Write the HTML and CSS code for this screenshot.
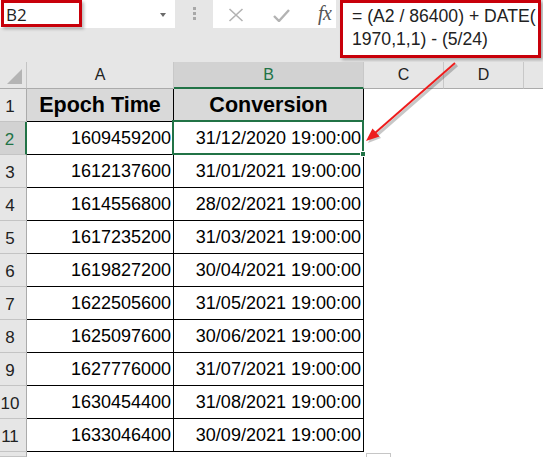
FILE: index.html
```html
<!DOCTYPE html>
<html>
<head>
<meta charset="utf-8">
<link rel="stylesheet" href="styles.css">
</head>
<body>
<div class="page">
  <div class="toolbar">
    <div class="namebox">
      <span class="nb-text">B2</span>
      <span class="dd"></span>
      <div class="mark nb-mark"></div>
    </div>
    <div class="dots"><i></i><i></i><i></i></div>
    <div class="fxbox">
      <svg class="ic-x" width="16" height="14" viewBox="0 0 16 14"><path d="M1.5 1 L14.5 13 M14.5 1 L1.5 13" stroke="#b3b3b3" stroke-width="1.6" fill="none"/></svg>
      <svg class="ic-ok" width="17" height="13" viewBox="0 0 17 13"><path d="M1 7 L6 12 L16 1" stroke="#b3b3b3" stroke-width="2.4" fill="none"/></svg>
      <span class="fx">fx</span>
    </div>
    <div class="formula">= (A2 / 86400) + DATE(<br>1970,1,1) - (5/24)</div>
  </div>

  <div class="sheet">
    <div class="corner"><span class="tri"></span></div>
    <div class="ch">A</div>
    <div class="ch ch-sel">B</div>
    <div class="ch">C</div>
    <div class="ch">D</div>
    <div class="ch ch-end"></div>

    <div class="rh">1</div>
    <div class="c hd">Epoch Time</div>
    <div class="c hd">Conversion</div>
    <div class="e"></div><div class="e"></div><div class="e"></div>

    <div class="rh rh-sel">2</div>
    <div class="c num">1609459200</div>
    <div class="c num sel">31/12/2020 19:00:00<span class="handle"></span></div>
    <div class="e"></div><div class="e"></div><div class="e"></div>

    <div class="rh">3</div>
    <div class="c num">1612137600</div>
    <div class="c num">31/01/2021 19:00:00</div>
    <div class="e"></div><div class="e"></div><div class="e"></div>

    <div class="rh">4</div>
    <div class="c num">1614556800</div>
    <div class="c num">28/02/2021 19:00:00</div>
    <div class="e"></div><div class="e"></div><div class="e"></div>

    <div class="rh">5</div>
    <div class="c num">1617235200</div>
    <div class="c num">31/03/2021 19:00:00</div>
    <div class="e"></div><div class="e"></div><div class="e"></div>

    <div class="rh">6</div>
    <div class="c num">1619827200</div>
    <div class="c num">30/04/2021 19:00:00</div>
    <div class="e"></div><div class="e"></div><div class="e"></div>

    <div class="rh">7</div>
    <div class="c num">1622505600</div>
    <div class="c num">31/05/2021 19:00:00</div>
    <div class="e"></div><div class="e"></div><div class="e"></div>

    <div class="rh">8</div>
    <div class="c num">1625097600</div>
    <div class="c num">30/06/2021 19:00:00</div>
    <div class="e"></div><div class="e"></div><div class="e"></div>

    <div class="rh">9</div>
    <div class="c num">1627776000</div>
    <div class="c num">31/07/2021 19:00:00</div>
    <div class="e"></div><div class="e"></div><div class="e"></div>

    <div class="rh">10</div>
    <div class="c num">1630454400</div>
    <div class="c num">31/08/2021 19:00:00</div>
    <div class="e"></div><div class="e"></div><div class="e"></div>

    <div class="rh">11</div>
    <div class="c num">1633046400</div>
    <div class="c num">30/09/2021 19:00:00</div>
    <div class="e"></div><div class="e"></div><div class="e"></div>

    <div class="rh"></div>
    <div class="e"></div>
    <div class="e"></div>
    <div class="e"><span class="paste"></span></div>
    <div class="e"></div><div class="e"></div>
  </div>

  <svg class="arrow" width="543" height="457" viewBox="0 0 543 457">
    <line x1="457" y1="65" x2="377" y2="135" stroke="rgba(0,0,0,0.22)" stroke-width="3"/>
    <polygon points="368,143 381,138 374,130" fill="rgba(0,0,0,0.22)"/>
    <line x1="455" y1="63" x2="375" y2="133" stroke="#ee1c1c" stroke-width="2"/>
    <polygon points="366,141 379.5,136.5 372.5,128.5" fill="#ee1c1c"/>
  </svg>
</div>
</body>
</html>
```

FILE: styles.css
```css
* { box-sizing: border-box; }
html, body { margin: 0; padding: 0; }
body {
  width: 543px;
  height: 457px;
  overflow: hidden;
  background: #e6e6e6;
  font-family: "Liberation Sans", Arial, sans-serif;
}
.page {
  position: relative;
  width: 543px;
  height: 457px;
  overflow: hidden;
}

/* ---------- formula bar ---------- */
.toolbar {
  display: flex;
  align-items: flex-start;
  height: 62px;
}
.namebox {
  position: relative;
  width: 175px;
  height: 28px;
  background: #fff;
}
.nb-text {
  position: absolute;
  left: 6px;
  top: 4px;
  font-size: 17px;
  color: #222;
  font-family: "Open Sans", "Liberation Sans", sans-serif;
  line-height: 21px;
}
.dd {
  position: absolute;
  left: 160px;
  top: 13px;
  width: 0;
  height: 0;
  border-left: 3.5px solid transparent;
  border-right: 3.5px solid transparent;
  border-top: 4px solid #6a6a6a;
}
.mark {
  position: absolute;
  border: 3px solid #c8000a;
  box-shadow: 2px 2px 3px rgba(0,0,0,0.28);
}
.nb-mark {
  left: 1px;
  top: 0;
  width: 81px;
  height: 27px;
}
.dots {
  width: 38px;
  height: 28px;
  display: flex;
  flex-direction: column;
  align-items: center;
  padding-top: 7px;
  gap: 2px;
}
.dots i {
  display: block;
  width: 3px;
  height: 3px;
  background: #a8a8a8;
}
.fxbox {
  width: 123px;
  height: 28px;
  background: #fff;
  display: flex;
  align-items: center;
  padding-left: 15px;
}
.ic-x { margin-top: 1px; }
.ic-ok { margin-left: 29px; margin-top: 3px; }
.fx {
  margin-left: 28px;
  font-family: "Liberation Serif", "Times New Roman", serif;
  font-style: italic;
  font-size: 20px;
  color: #555;
  letter-spacing: -0.5px;
  margin-top: -2px;
}
.formula {
  margin-left: 4px;
  width: 201px;
  height: 58px;
  background: #fff;
  border: 3px solid #c8000a;
  box-shadow: 2px 2px 3px rgba(0,0,0,0.28);
  padding: 2px 0 0 9px;
  font-size: 17.6px;
  line-height: 23px;
  color: #222;
  white-space: nowrap;
  overflow: hidden;
}

/* ---------- sheet ---------- */
.sheet {
  display: grid;
  grid-template-columns: 27px 147px 190px 80px 80px 19px;
  grid-template-rows: 27px repeat(11, 33px) 1fr;
  height: 395px;
  background: #fff;
}
.corner {
  position: relative;
  background: #e6e6e6;
  border-right: 1px solid #c4c4c4;
  border-bottom: 1px solid #ababab;
}
.tri {
  position: absolute;
  right: 4px;
  bottom: 4px;
  width: 0;
  height: 0;
  border-left: 15px solid transparent;
  border-bottom: 15px solid #b4b4b4;
}
.ch {
  background: #e6e6e6;
  border-right: 1px solid #c8c8c8;
  border-bottom: 1px solid #ababab;
  display: flex;
  align-items: flex-end;
  justify-content: center;
  padding-bottom: 4px;
  font-size: 16px;
  color: #222;
}
.ch-sel {
  background: #d2d2d2;
  color: #217346;
  border-bottom: 2px solid #217346;
  padding-bottom: 3px;
}
.ch-end { border-right: none; }
.rh {
  background: #e6e6e6;
  border-right: 1px solid #ababab;
  border-bottom: 1px solid #c4c4c4;
  display: flex;
  align-items: flex-end;
  justify-content: center;
  padding: 0 6px 4px 0;
  font-size: 17px;
  color: #222;
}
.rh-sel {
  background: #d2d2d2;
  color: #217346;
  border-right: 2px solid #217346;
}
.c {
  border-right: 1px solid #000;
  border-bottom: 1px solid #000;
  display: flex;
  align-items: center;
  font-size: 18px;
  color: #000;
  white-space: nowrap;
}
.hd {
  background: #d9d9d9;
  justify-content: center;
  font-weight: bold;
  font-size: 21.5px;
  padding-top: 1px;
}
.num {
  justify-content: flex-end;
  padding-right: 2px;
  background: #fff;
}
.sel { position: relative; }
.sel::after {
  content: "";
  position: absolute;
  left: -2px;
  top: -2px;
  right: -1px;
  bottom: -1px;
  border: 2px solid #217346;
}
.handle {
  position: absolute;
  right: -3px;
  bottom: -3px;
  width: 6px;
  height: 6px;
  background: #217346;
  border: 1px solid #fff;
  z-index: 2;
}
.e { background: #fff; position: relative; }
.paste {
  position: absolute;
  left: 2px;
  top: 1px;
  width: 25px;
  height: 10px;
  border: 1px solid #c6c6c6;
  background: #fff;
}

/* ---------- annotation arrow ---------- */
.arrow {
  position: absolute;
  left: 0;
  top: 0;
  pointer-events: none;
}
```
